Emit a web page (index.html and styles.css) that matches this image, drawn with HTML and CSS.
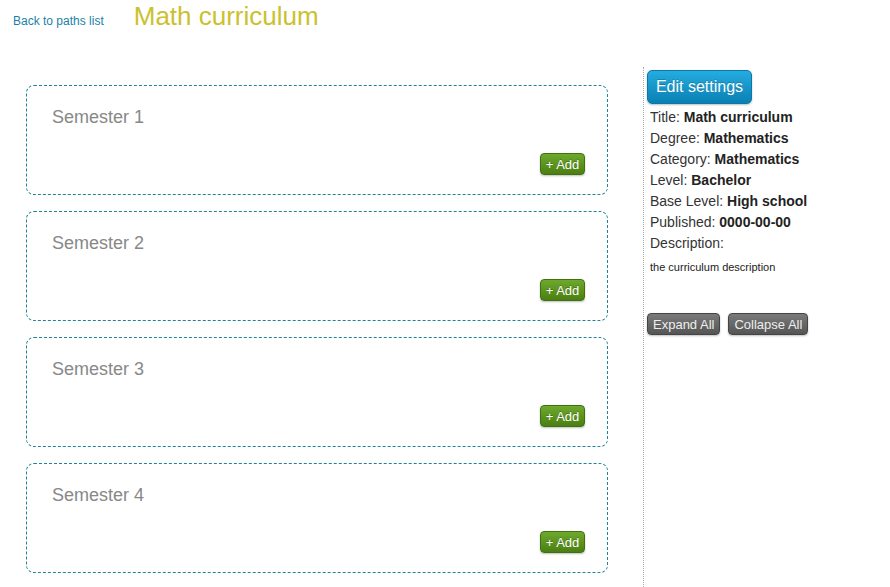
FILE: index.html
```html
<!DOCTYPE html>
<html>
<head>
<meta charset="utf-8">
<link rel="stylesheet" href="styles.css">
</head>
<body>
<header class="top">
  <a class="back" href="#">Back to paths list</a>
  <h1 class="title">Math curriculum</h1>
</header>
<main class="main">
  <section class="semesters">
    <div class="card"><div class="card-title">Semester 1</div><div class="card-actions"><button class="btn-add">+ Add</button></div></div>
    <div class="card"><div class="card-title">Semester 2</div><div class="card-actions"><button class="btn-add">+ Add</button></div></div>
    <div class="card"><div class="card-title">Semester 3</div><div class="card-actions"><button class="btn-add">+ Add</button></div></div>
    <div class="card"><div class="card-title">Semester 4</div><div class="card-actions"><button class="btn-add">+ Add</button></div></div>
  </section>
  <aside class="sidebar">
    <button class="btn-edit">Edit settings</button>
    <ul class="info">
      <li>Title: <b>Math curriculum</b></li>
      <li>Degree: <b>Mathematics</b></li>
      <li>Category: <b>Mathematics</b></li>
      <li>Level: <b>Bachelor</b></li>
      <li>Base Level: <b>High school</b></li>
      <li>Published: <b>0000-00-00</b></li>
      <li>Description:</li>
    </ul>
    <p class="desc">the curriculum description</p>
    <div class="tools">
      <button class="btn-dark">Expand All</button>
      <button class="btn-dark">Collapse All</button>
    </div>
  </aside>
</main>
</body>
</html>
```
FILE: styles.css
```css
html, body {
  margin: 0;
  padding: 0;
  background: #fff;
  font-family: "Liberation Sans", Arial, sans-serif;
  height: 100%;
}
body {
  display: flex;
  flex-direction: column;
  overflow: hidden;
}
.top {
  display: flex;
  align-items: baseline;
  padding: 1px 0 0 13px;
  height: 67px;
  box-sizing: border-box;
}
.back {
  font-size: 12px;
  color: #1c7fa6;
  text-decoration: none;
}
.title {
  margin: 0 0 0 30px;
  font-size: 26px;
  font-weight: normal;
  color: #cbc12e;
}
.main {
  display: flex;
  flex: 1;
}
.semesters {
  display: flex;
  flex-direction: column;
  gap: 16px;
  padding: 18px 0 0 26px;
  width: 582px;
}
.card {
  height: 110px;
  box-sizing: border-box;
  border: 1px dashed #1f8594;
  border-radius: 8px;
  padding: 21px 22px 19px 25px;
  display: flex;
  flex-direction: column;
  justify-content: space-between;
}
.card-title {
  font-size: 18px;
  line-height: 20px;
  color: #888;
}
.card-actions {
  display: flex;
  justify-content: flex-end;
}
.btn-add {
  width: 45px;
  height: 22px;
  padding: 0;
  font-family: inherit;
  font-size: 13px;
  color: #fff;
  border: 1px solid #41700f;
  border-radius: 4px;
  background: linear-gradient(#6ea92d, #4b7f12);
  box-shadow: 0 1px 2px rgba(0,0,0,0.25);
  text-shadow: 0 -1px 0 rgba(0,0,0,0.25);
}
.sidebar {
  margin-left: 35px;
  flex: 1;
  border-left: 1px dotted #aaa;
  padding: 3px 0 0 3px;
}
.btn-edit {
  width: 105px;
  height: 34px;
  padding: 0;
  font-family: inherit;
  font-size: 16px;
  color: #fff;
  border: 1px solid #0a78a8;
  border-radius: 5px;
  background: linear-gradient(#25acdf, #0a80b4);
  box-shadow: 0 1px 2px rgba(0,0,0,0.25);
  text-shadow: 0 -1px 0 rgba(0,0,0,0.2);
}
.info {
  list-style: none;
  margin: 3px 0 0 3px;
  padding: 0;
  font-size: 14px;
  line-height: 21px;
  color: #333;
}
.info b {
  color: #222;
}
.desc {
  margin: 6px 0 0 3px;
  font-size: 11px;
  line-height: 14px;
  color: #222;
}
.tools {
  display: flex;
  gap: 8px;
  margin-top: 39px;
}
.btn-dark {
  height: 22px;
  padding: 0 5px;
  font-family: inherit;
  font-size: 13px;
  color: #eee;
  border: 1px solid #444;
  border-radius: 4px;
  background: linear-gradient(#7a7a7a, #555);
  box-shadow: 0 1px 2px rgba(0,0,0,0.25);
}
```
